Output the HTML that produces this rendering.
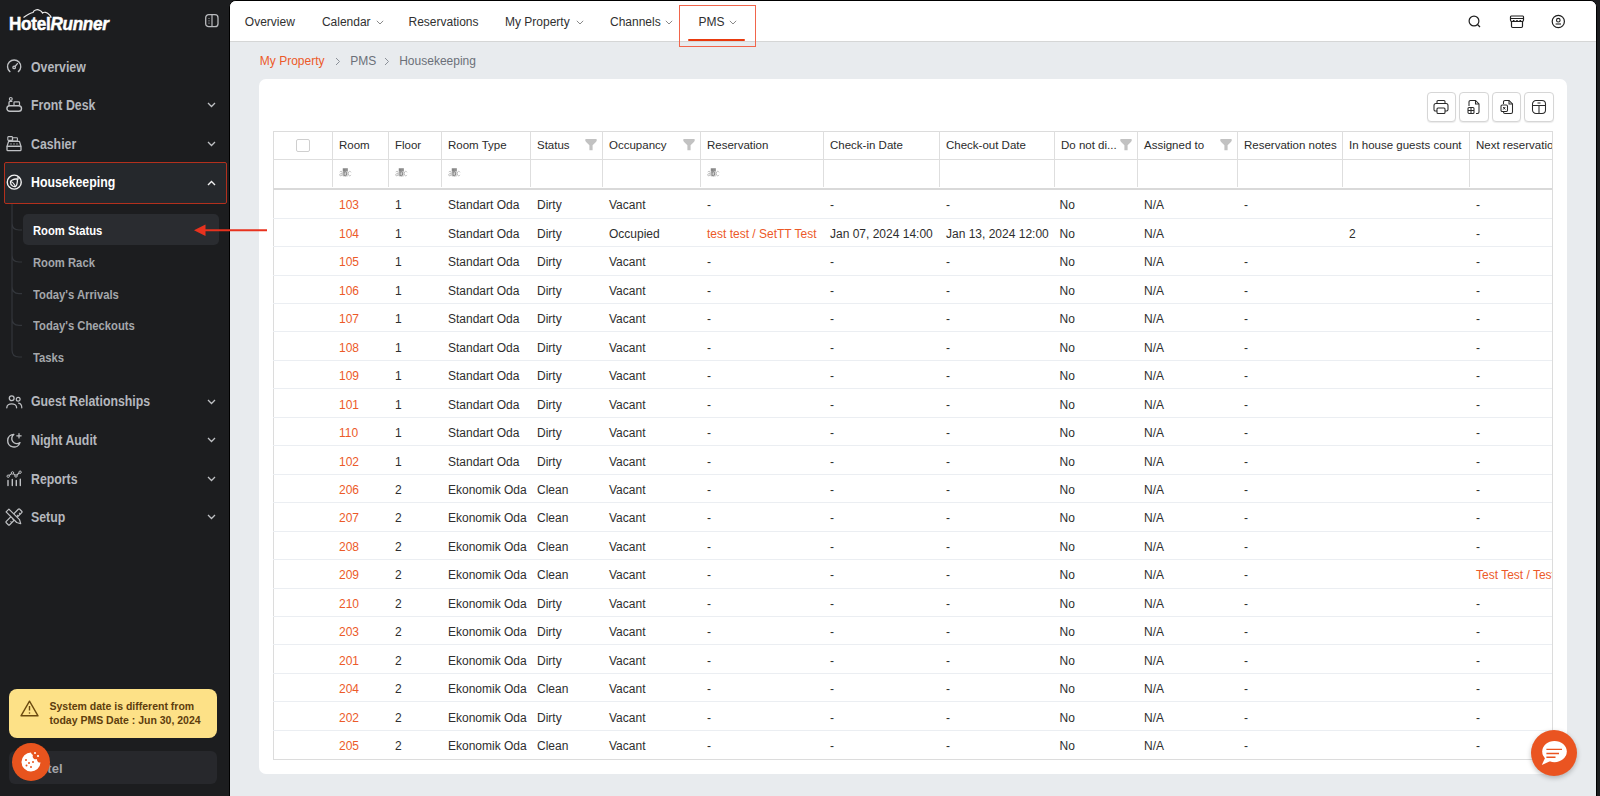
<!DOCTYPE html>
<html><head><meta charset="utf-8">
<style>
*{box-sizing:border-box;margin:0;padding:0}
html,body{width:1600px;height:796px;overflow:hidden;background:#1c1d1f;font-family:"Liberation Sans",sans-serif;}
.abs{position:absolute}
.t{position:absolute;white-space:nowrap;line-height:1}
.side-t{position:absolute;white-space:nowrap;font-weight:700;font-size:14px;transform:scaleX(0.88);transform-origin:0 0;color:#b4b7bd;line-height:1}
.sub-t{position:absolute;white-space:nowrap;font-weight:700;font-size:12.5px;transform:scaleX(0.9);transform-origin:0 0;color:#a8aaae;line-height:1}
svg{position:absolute;overflow:visible}
.nav{position:absolute;font-size:12px;color:#303030;white-space:nowrap;line-height:1;top:16px}
.hd{position:absolute;font-size:11.5px;color:#2b2b2b;white-space:nowrap;line-height:1}
.cell{position:absolute;font-size:12px;color:#2e2e2e;white-space:nowrap;line-height:1}
.or{color:#ec5a29}
.btn{position:absolute;top:92px;width:29.5px;height:29.8px;border:1px solid #d6d6d6;border-radius:4px;background:#fff;box-shadow:0 1px 1px rgba(0,0,0,.08)}
</style></head><body>

<div class="abs" style="left:0;top:0;width:229px;height:796px;background:#1c1d1f">
<div class="t" style="left:9px;top:14px;font-size:19px;font-weight:700;color:#fff;transform:scaleX(0.9);transform-origin:0 0;letter-spacing:-0.3px;-webkit-text-stroke:0.5px #fff">Hotel<i>Runner</i></div>
<svg style="left:0;top:0" width="229" height="40"><path d="M23.5 17.5 C27 15,30 13,33 12.5 C34 10,37 9,39.5 10.2 C41 10.8,42 11.8,42.5 13 C44 11.8,47 12,48.5 14 C50 15,51 16.5,51 18" fill="none" stroke="#ececec" stroke-width="1.2"/></svg>
<svg style="left:205px;top:14px" width="14" height="14" viewBox="0 0 14 14"><rect x="0.7" y="0.7" width="12.3" height="12" rx="3" fill="none" stroke="#b9bbbe" stroke-width="1.3"/><line x1="7" y1="1" x2="7" y2="13" stroke="#b9bbbe" stroke-width="1.2"/><circle cx="4" cy="4.5" r=".6" fill="#b9bbbe"/><circle cx="4" cy="6.8" r=".6" fill="#b9bbbe"/><circle cx="4" cy="9.1" r=".6" fill="#b9bbbe"/></svg>
<div class="abs" style="left:3.5px;top:162.2px;width:223.2px;height:41.8px;background:#25282c;border:1.8px solid #b3301d;border-radius:2px"></div>
<div class="side-t" style="left:30.5px;top:59.6px;color:#b4b7bd">Overview</div>
<svg style="left:6px;top:58.8px" width="16" height="16" viewBox="0 0 16 16"><path d="M3.9 12.6 A6.6 6.6 0 1 1 12.4 12.6" fill="none" stroke="#bfc1c4" stroke-width="1.4" stroke-linecap="round"/><circle cx="8.15" cy="8.4" r="1.25" fill="none" stroke="#bfc1c4" stroke-width="1.3"/><line x1="9" y1="7.5" x2="11.4" y2="4.6" stroke="#bfc1c4" stroke-width="1.3" stroke-linecap="round"/></svg>
<div class="side-t" style="left:30.5px;top:98.1px;color:#b4b7bd">Front Desk</div>
<svg style="left:6px;top:97.3px" width="16" height="16" viewBox="0 0 16 16"><circle cx="4.8" cy="1.9" r="1.4" fill="none" stroke="#bfc1c4" stroke-width="1.2"/><path d="M3 8.4 V5.6 Q3 4.4 4.2 4.4 H5.8" fill="none" stroke="#bfc1c4" stroke-width="1.3" stroke-linecap="round"/><rect x="8" y="4.9" width="5.5" height="3.6" rx=".7" fill="none" stroke="#bfc1c4" stroke-width="1.2"/><rect x="0.9" y="8.7" width="14.6" height="5.6" rx="2.8" fill="none" stroke="#bfc1c4" stroke-width="1.4"/></svg>
<svg style="left:207px;top:102.3px" width="9" height="6" viewBox="0 0 9 6"><path d="M1 1 L4.5 4.5 L8 1" fill="none" stroke="#bfc1c4" stroke-width="1.3"/></svg>
<div class="side-t" style="left:30.5px;top:136.5px;color:#b4b7bd">Cashier</div>
<svg style="left:6px;top:135.7px" width="16" height="16" viewBox="0 0 16 16"><rect x="1.8" y="0.6" width="4.6" height="3.8" rx=".6" fill="none" stroke="#bfc1c4" stroke-width="1.1"/><rect x="6.6" y="1.8" width="4.8" height="3.2" rx=".6" fill="none" stroke="#bfc1c4" stroke-width="1.1"/><path d="M2.6 5.4 H13.4 L15 10.4 H1 Z" fill="none" stroke="#bfc1c4" stroke-width="1.3" stroke-linejoin="round"/><rect x="1" y="10.4" width="14" height="4.2" rx=".9" fill="none" stroke="#bfc1c4" stroke-width="1.3"/><circle cx="5" cy="7.9" r=".7" fill="#bfc1c4"/><circle cx="8" cy="7.9" r=".7" fill="#bfc1c4"/><circle cx="11" cy="7.9" r=".7" fill="#bfc1c4"/></svg>
<svg style="left:207px;top:140.7px" width="9" height="6" viewBox="0 0 9 6"><path d="M1 1 L4.5 4.5 L8 1" fill="none" stroke="#bfc1c4" stroke-width="1.3"/></svg>
<div class="side-t" style="left:30.5px;top:175.3px;color:#ffffff">Housekeeping</div>
<svg style="left:6px;top:174.5px" width="16" height="16" viewBox="0 0 16 16"><circle cx="8.25" cy="7.15" r="7" fill="none" stroke="#f2f2f2" stroke-width="1.4"/><path d="M11.2 4.2 Q9 3.6 6.2 5 Q4.6 5.9 4.4 6.8 Q4.3 9.6 6.6 11 Q8.2 11.8 9.6 11.5 Q10.6 10.6 11 8.8 Q11.8 6 11.2 4.2 Z" fill="none" stroke="#f2f2f2" stroke-width="1.3" stroke-linejoin="round"/><path d="M4.6 6.8 Q6.5 6.2 9.5 11.4" fill="none" stroke="#f2f2f2" stroke-width="1.1"/><circle cx="12" cy="3.4" r="0.9" fill="none" stroke="#f2f2f2" stroke-width="1"/></svg>
<svg style="left:207px;top:179.5px" width="9" height="6" viewBox="0 0 9 6"><path d="M1 5 L4.5 1.5 L8 5" fill="none" stroke="#f0f0f0" stroke-width="1.4"/></svg>
<div class="side-t" style="left:30.5px;top:394.4px;color:#b4b7bd">Guest Relationships</div>
<svg style="left:6px;top:393.6px" width="16" height="16" viewBox="0 0 16 16"><circle cx="5.7" cy="4.3" r="2.4" fill="none" stroke="#bfc1c4" stroke-width="1.3"/><path d="M0.8 13.8 C0.8 8.6,10.6 8.6,10.6 13.8" fill="none" stroke="#bfc1c4" stroke-width="1.3" stroke-linecap="round"/><circle cx="12.2" cy="5.2" r="1.9" fill="none" stroke="#bfc1c4" stroke-width="1.2"/><path d="M12.6 9.2 C14.8 9.6,15.8 11.4,15.8 13.8" fill="none" stroke="#bfc1c4" stroke-width="1.2" stroke-linecap="round"/></svg>
<svg style="left:207px;top:398.6px" width="9" height="6" viewBox="0 0 9 6"><path d="M1 1 L4.5 4.5 L8 1" fill="none" stroke="#bfc1c4" stroke-width="1.3"/></svg>
<div class="side-t" style="left:30.5px;top:433.0px;color:#b4b7bd">Night Audit</div>
<svg style="left:6px;top:432.2px" width="16" height="16" viewBox="0 0 16 16"><path d="M7.8 2.4 A6.3 6.3 0 1 0 14 10.6 A4.9 4.9 0 0 1 7.8 2.4 Z" fill="none" stroke="#bfc1c4" stroke-width="1.4" stroke-linejoin="round"/><path d="M13 1.6 V6 M10.8 3.8 H15.2" stroke="#bfc1c4" stroke-width="1.2" stroke-linecap="round"/></svg>
<svg style="left:207px;top:437.2px" width="9" height="6" viewBox="0 0 9 6"><path d="M1 1 L4.5 4.5 L8 1" fill="none" stroke="#bfc1c4" stroke-width="1.3"/></svg>
<div class="side-t" style="left:30.5px;top:471.8px;color:#b4b7bd">Reports</div>
<svg style="left:6px;top:471.0px" width="16" height="16" viewBox="0 0 16 16"><path d="M2 14.5 V9.5 M6.3 14.5 V8.5 M10.3 14.5 V9.5 M14.3 14.5 V8.2" stroke="#bfc1c4" stroke-width="1.4" stroke-linecap="round"/><path d="M2.2 5.2 L6.5 1.9 L10 5 L14.1 1" fill="none" stroke="#bfc1c4" stroke-width="1.1"/><circle cx="2.2" cy="5.2" r="1.2" fill="#1c1d1f" stroke="#bfc1c4" stroke-width="1"/><circle cx="6.5" cy="1.9" r="1.2" fill="#1c1d1f" stroke="#bfc1c4" stroke-width="1"/><circle cx="10" cy="5" r="1.2" fill="#1c1d1f" stroke="#bfc1c4" stroke-width="1"/><circle cx="14.1" cy="1.2" r="1.2" fill="#1c1d1f" stroke="#bfc1c4" stroke-width="1"/></svg>
<svg style="left:207px;top:476.0px" width="9" height="6" viewBox="0 0 9 6"><path d="M1 1 L4.5 4.5 L8 1" fill="none" stroke="#bfc1c4" stroke-width="1.3"/></svg>
<div class="side-t" style="left:30.5px;top:510.0px;color:#b4b7bd">Setup</div>
<svg style="left:6px;top:509.2px" width="16" height="16" viewBox="0 0 16 16"><g transform="rotate(45 8 8)"><rect x="5.6" y="-1.5" width="4.8" height="19" rx="1" fill="none" stroke="#bfc1c4" stroke-width="1.2"/><path d="M10.4 1.5 H8.6 M10.4 4.5 H8.6 M10.4 7.5 H8.6 M10.4 10.5 H8.6 M10.4 13.5 H8.6" stroke="#bfc1c4" stroke-width="1"/></g><g transform="rotate(-45 8 8)"><path d="M6 -1.2 H10 V13.8 L8 17.5 L6 13.8 Z" fill="#1c1d1f" stroke="#bfc1c4" stroke-width="1.2" stroke-linejoin="round"/></g></svg>
<svg style="left:207px;top:514.2px" width="9" height="6" viewBox="0 0 9 6"><path d="M1 1 L4.5 4.5 L8 1" fill="none" stroke="#bfc1c4" stroke-width="1.3"/></svg>
<svg style="left:0;top:200px" width="30" height="170"><path d="M12 4 V150 Q12 157 19 157 H22 M12 23 Q12 30 19 30 H22 M12 55 Q12 62 19 62 H22 M12 86.6 Q12 93.6 19 93.6 H22 M12 118.3 Q12 125.3 19 125.3 H22" fill="none" stroke="#33363b" stroke-width="1.2"/></svg>
<div class="abs" style="left:22.5px;top:214px;width:196px;height:30.5px;background:#2a2c30;border-radius:5px"></div>
<div class="sub-t" style="left:32.5px;top:225.4px;color:#ffffff">Room Status</div>
<div class="sub-t" style="left:32.5px;top:256.8px;color:#a4a7ab">Room Rack</div>
<div class="sub-t" style="left:32.5px;top:288.6px;color:#a4a7ab">Today's Arrivals</div>
<div class="sub-t" style="left:32.5px;top:320.3px;color:#a4a7ab">Today's Checkouts</div>
<div class="sub-t" style="left:32.5px;top:352.0px;color:#a4a7ab">Tasks</div>
<div class="abs" style="left:9px;top:688.5px;width:208px;height:49px;background:#fde187;border-radius:8px"></div>
<svg style="left:20px;top:700px" width="19" height="17" viewBox="0 0 19 17"><path d="M9.5 1.2 L18 15.8 H1 Z" fill="none" stroke="#6b4a10" stroke-width="1.4" stroke-linejoin="round"/><line x1="9.5" y1="6" x2="9.5" y2="10.5" stroke="#6b4a10" stroke-width="1.4"/><circle cx="9.5" cy="13" r=".8" fill="#6b4a10"/></svg>
<div class="t" style="left:49.5px;top:700px;font-size:10.5px;font-weight:700;color:#5e3d0d;line-height:13.8px">System date is different from<br>today PMS Date : Jun 30, 2024</div>
<div class="abs" style="left:9px;top:751px;width:208px;height:33px;background:#27282c;border-radius:6px"></div>
<div class="t" style="left:30px;top:762px;font-size:13px;font-weight:700;color:#a3a5a9">Hotel</div>
<div class="abs" style="left:12.3px;top:743px;width:38px;height:38px;border-radius:50%;background:#e8541e"></div>
<svg style="left:20px;top:751px" width="22" height="22" viewBox="0 0 22 22"><path d="M11 1.5 A9.5 9.5 0 1 0 20.5 11.5 A3 3 0 0 1 17 8 A3 3 0 0 1 13 4 A3 3 0 0 1 11 1.5 Z" fill="#fff"/><circle cx="6" cy="9" r="1" fill="#e8541e"/><circle cx="9" cy="12" r="1" fill="#e8541e"/><circle cx="6.5" cy="14.5" r="1" fill="#e8541e"/><circle cx="11" cy="16" r="1" fill="#e8541e"/><circle cx="13" cy="11" r="1" fill="#e8541e"/><circle cx="15" cy="2" r="1" fill="#fff"/><circle cx="18" cy="5" r="1.1" fill="#fff"/></svg>
</div>
<div class="abs" style="left:229px;top:0;width:1368px;height:800px;border:1px solid #000;border-radius:7px 7px 0 0;background:#e8ebee;overflow:hidden"></div>
<div class="abs" style="left:230px;top:1px;width:1366px;height:40px;background:#fff;border-radius:6px 6px 0 0"></div>
<div class="abs" style="left:230px;top:41px;width:1366px;height:1px;background:#d5d6d6"></div>
<div class="nav" style="left:244.8px">Overview</div>
<div class="nav" style="left:321.9px">Calendar</div>
<svg style="left:375.5px;top:19.5px" width="8" height="5" viewBox="0 0 8 5"><path d="M0.8 0.8 L4 4 L7.2 0.8" fill="none" stroke="#8a8a8a" stroke-width="1"/></svg>
<div class="nav" style="left:408.5px">Reservations</div>
<div class="nav" style="left:505px">My Property</div>
<svg style="left:576.0px;top:19.5px" width="8" height="5" viewBox="0 0 8 5"><path d="M0.8 0.8 L4 4 L7.2 0.8" fill="none" stroke="#8a8a8a" stroke-width="1"/></svg>
<div class="nav" style="left:610px">Channels</div>
<svg style="left:664.7px;top:19.5px" width="8" height="5" viewBox="0 0 8 5"><path d="M0.8 0.8 L4 4 L7.2 0.8" fill="none" stroke="#8a8a8a" stroke-width="1"/></svg>
<div class="nav" style="left:698.6px">PMS</div>
<svg style="left:728.5px;top:19.5px" width="8" height="5" viewBox="0 0 8 5"><path d="M0.8 0.8 L4 4 L7.2 0.8" fill="none" stroke="#8a8a8a" stroke-width="1"/></svg>
<div class="abs" style="left:679px;top:5px;width:76.5px;height:42px;border:1.2px solid #f1654b"></div>
<div class="abs" style="left:688px;top:38.5px;width:56.5px;height:2.6px;background:#e93a0e;border-radius:2px"></div>
<svg style="left:1466px;top:13px" width="18" height="18" viewBox="0 0 18 18"><circle cx="8" cy="8" r="4.9" fill="none" stroke="#1f1f1f" stroke-width="1.2"/><line x1="11.5" y1="11.5" x2="14" y2="14" stroke="#1f1f1f" stroke-width="1.3"/></svg>
<svg style="left:1508px;top:13px" width="18" height="18" viewBox="0 0 18 18"><path d="M3.5 8 V13.3 Q3.5 14.5 4.7 14.5 H13.3 Q14.5 14.5 14.5 13.3 V8" fill="none" stroke="#1f1f1f" stroke-width="1.2"/><path d="M3.2 3 H14.8 Q15.5 3 15.5 4 V7 Q15.5 8.5 14 8.5 Q12.3 8.5 12.3 7 Q12.3 8.5 10.6 8.5 Q9 8.5 9 7 Q9 8.5 7.4 8.5 Q5.7 8.5 5.7 7 Q5.7 8.5 4 8.5 Q2.5 8.5 2.5 7 V4 Q2.5 3 3.2 3 Z" fill="none" stroke="#1f1f1f" stroke-width="1.2"/><line x1="2.5" y1="5.5" x2="15.5" y2="5.5" stroke="#1f1f1f" stroke-width="1"/></svg>
<svg style="left:1549px;top:12px" width="19" height="19" viewBox="0 0 19 19"><circle cx="9.3" cy="9.5" r="6.1" fill="none" stroke="#1f1f1f" stroke-width="1.2"/><circle cx="9.3" cy="8.2" r="1.8" fill="none" stroke="#1f1f1f" stroke-width="1.1"/><line x1="6.6" y1="12" x2="12" y2="12" stroke="#1f1f1f" stroke-width="1.1"/></svg>
<div class="t" style="left:259.8px;top:55px;font-size:12px;color:#ec5a29">My Property</div>
<svg style="left:335px;top:56.5px" width="6" height="9" viewBox="0 0 6 9"><path d="M1 1 L4.5 4.5 L1 8" fill="none" stroke="#8b9098" stroke-width="1"/></svg>
<div class="t" style="left:350.2px;top:55px;font-size:12px;color:#6b7079">PMS</div>
<svg style="left:384px;top:56.5px" width="6" height="9" viewBox="0 0 6 9"><path d="M1 1 L4.5 4.5 L1 8" fill="none" stroke="#8b9098" stroke-width="1"/></svg>
<div class="t" style="left:399.2px;top:55px;font-size:12px;color:#6b7079">Housekeeping</div>
<div class="abs" style="left:259px;top:78.5px;width:1307.7px;height:695px;background:#fff;border-radius:7px"></div>
<div class="btn" style="left:1426.5px"></div>
<div class="btn" style="left:1459px"></div>
<div class="btn" style="left:1491.5px"></div>
<div class="btn" style="left:1524.3px"></div>
<svg style="left:1433px;top:99px" width="16" height="16" viewBox="0 0 16 16"><path d="M4 4.5 V2.5 Q4 1.5 5 1.5 H11 Q12 1.5 12 2.5 V4.5" fill="none" stroke="#2a2a2a" stroke-width="1.05"/><path d="M4 12 H2.5 Q1 12 1 10.5 V6.5 Q1 4.5 3 4.5 H13 Q15 4.5 15 6.5 V10.5 Q15 12 13.5 12 H12" fill="none" stroke="#2a2a2a" stroke-width="1.05"/><rect x="4" y="9" width="8" height="5.5" rx="1" fill="none" stroke="#2a2a2a" stroke-width="1.05"/></svg>
<svg style="left:1466px;top:99px" width="16" height="16" viewBox="0 0 16 16"><path d="M3 7 V3 Q3 1.5 4.5 1.5 H9.5 L13 5 V13 Q13 14.5 11.5 14.5 H10" fill="none" stroke="#2a2a2a" stroke-width="1.05"/><path d="M9.5 1.5 V5 H13" fill="none" stroke="#2a2a2a" stroke-width="1.05"/><rect x="2" y="8.5" width="6" height="6" rx="1" fill="none" stroke="#2a2a2a" stroke-width="1.05"/><path d="M5 8.5 V14.5 M2 11.5 H8" fill="none" stroke="#2a2a2a" stroke-width="1.05"/></svg>
<svg style="left:1498.5px;top:99px" width="16" height="16" viewBox="0 0 16 16"><path d="M4.5 5 V3 Q4.5 1.5 6 1.5 H10 L13.5 5 V13 Q13.5 14.5 12 14.5 H6 Q4.5 14.5 4.5 13" fill="none" stroke="#2a2a2a" stroke-width="1.05"/><path d="M10 1.5 V5 H13.5" fill="none" stroke="#2a2a2a" stroke-width="1.05"/><rect x="2" y="6" width="6.5" height="6.5" rx="1.2" fill="none" stroke="#2a2a2a" stroke-width="1.05"/><path d="M4.2 8 L6.3 10.5 M6.3 8 L4.2 10.5" stroke="#1f1f1f" stroke-width="1"/></svg>
<svg style="left:1531px;top:99px" width="16" height="16" viewBox="0 0 16 16"><rect x="1.5" y="1.5" width="13" height="13" rx="3.5" fill="none" stroke="#2a2a2a" stroke-width="1.05"/><path d="M1.5 6.5 H14.5 M8 6.5 V14.5" fill="none" stroke="#2a2a2a" stroke-width="1.05"/><path d="M6.5 4 H9.5" fill="none" stroke="#2a2a2a" stroke-width="1.05"/></svg>
<div class="abs" style="left:273px;top:130.7px;width:1280.0px;height:629.8px;border:1px solid #dcdcdc;overflow:hidden"></div>
<div class="abs" style="left:273px;top:159.3px;width:1279.0px;height:1px;background:#dedede"></div>
<div class="abs" style="left:273px;top:188px;width:1279.0px;height:1.6px;background:#d9d9d9"></div>
<div class="abs" style="left:332px;top:130.7px;width:1px;height:56.8px;background:#dedede"></div>
<div class="abs" style="left:388px;top:130.7px;width:1px;height:56.8px;background:#dedede"></div>
<div class="abs" style="left:441px;top:130.7px;width:1px;height:56.8px;background:#dedede"></div>
<div class="abs" style="left:530px;top:130.7px;width:1px;height:56.8px;background:#dedede"></div>
<div class="abs" style="left:602px;top:130.7px;width:1px;height:56.8px;background:#dedede"></div>
<div class="abs" style="left:700px;top:130.7px;width:1px;height:56.8px;background:#dedede"></div>
<div class="abs" style="left:823px;top:130.7px;width:1px;height:56.8px;background:#dedede"></div>
<div class="abs" style="left:939px;top:130.7px;width:1px;height:56.8px;background:#dedede"></div>
<div class="abs" style="left:1054px;top:130.7px;width:1px;height:56.8px;background:#dedede"></div>
<div class="abs" style="left:1137px;top:130.7px;width:1px;height:56.8px;background:#dedede"></div>
<div class="abs" style="left:1237px;top:130.7px;width:1px;height:56.8px;background:#dedede"></div>
<div class="abs" style="left:1342px;top:130.7px;width:1px;height:56.8px;background:#dedede"></div>
<div class="abs" style="left:1469px;top:130.7px;width:1px;height:56.8px;background:#dedede"></div>
<div class="abs" style="left:296px;top:139px;width:13.5px;height:13px;border:1px solid #cfcfcf;border-radius:2px;background:#fff"></div>
<div class="abs" style="left:273px;top:130.7px;width:1279.0px;height:630px;overflow:hidden">
<div class="hd" style="left:66.0px;top:9.3px">Room</div>
<svg style="left:65.5px;top:37.8px" width="13" height="9" viewBox="0 0 13 9"><path d="M0.8 4.2 Q1.2 3.3 2.1 3.3 Q3.2 3.3 3.2 4.4 V7.8 M3.2 5.6 Q0.6 5.4 0.6 6.8 Q0.7 7.9 1.8 7.8 Q2.8 7.7 3.2 6.8" fill="none" stroke="#b5b5b5" stroke-width=".9"/><rect x="3.8" y="0.3" width="5" height="8.2" fill="#cfcfcf"/><rect x="3.8" y="0.3" width="5" height="3" fill="#8f8f8f"/><path d="M5 1 V7.8 M5 4.6 Q5.6 3.7 6.4 3.7 Q7.6 3.8 7.6 5.7 Q7.6 7.8 6.3 7.8 Q5.5 7.8 5 7" fill="none" stroke="#7a7a7a" stroke-width=".9"/><path d="M12 4.3 Q11.5 3.3 10.6 3.3 Q9.3 3.4 9.3 5.6 Q9.3 7.8 10.6 7.8 Q11.5 7.8 12 6.9" fill="none" stroke="#b5b5b5" stroke-width=".9"/></svg>
<div class="hd" style="left:122.0px;top:9.3px">Floor</div>
<svg style="left:121.5px;top:37.8px" width="13" height="9" viewBox="0 0 13 9"><path d="M0.8 4.2 Q1.2 3.3 2.1 3.3 Q3.2 3.3 3.2 4.4 V7.8 M3.2 5.6 Q0.6 5.4 0.6 6.8 Q0.7 7.9 1.8 7.8 Q2.8 7.7 3.2 6.8" fill="none" stroke="#b5b5b5" stroke-width=".9"/><rect x="3.8" y="0.3" width="5" height="8.2" fill="#cfcfcf"/><rect x="3.8" y="0.3" width="5" height="3" fill="#8f8f8f"/><path d="M5 1 V7.8 M5 4.6 Q5.6 3.7 6.4 3.7 Q7.6 3.8 7.6 5.7 Q7.6 7.8 6.3 7.8 Q5.5 7.8 5 7" fill="none" stroke="#7a7a7a" stroke-width=".9"/><path d="M12 4.3 Q11.5 3.3 10.6 3.3 Q9.3 3.4 9.3 5.6 Q9.3 7.8 10.6 7.8 Q11.5 7.8 12 6.9" fill="none" stroke="#b5b5b5" stroke-width=".9"/></svg>
<div class="hd" style="left:175.0px;top:9.3px">Room Type</div>
<svg style="left:174.5px;top:37.8px" width="13" height="9" viewBox="0 0 13 9"><path d="M0.8 4.2 Q1.2 3.3 2.1 3.3 Q3.2 3.3 3.2 4.4 V7.8 M3.2 5.6 Q0.6 5.4 0.6 6.8 Q0.7 7.9 1.8 7.8 Q2.8 7.7 3.2 6.8" fill="none" stroke="#b5b5b5" stroke-width=".9"/><rect x="3.8" y="0.3" width="5" height="8.2" fill="#cfcfcf"/><rect x="3.8" y="0.3" width="5" height="3" fill="#8f8f8f"/><path d="M5 1 V7.8 M5 4.6 Q5.6 3.7 6.4 3.7 Q7.6 3.8 7.6 5.7 Q7.6 7.8 6.3 7.8 Q5.5 7.8 5 7" fill="none" stroke="#7a7a7a" stroke-width=".9"/><path d="M12 4.3 Q11.5 3.3 10.6 3.3 Q9.3 3.4 9.3 5.6 Q9.3 7.8 10.6 7.8 Q11.5 7.8 12 6.9" fill="none" stroke="#b5b5b5" stroke-width=".9"/></svg>
<div class="hd" style="left:264.0px;top:9.3px">Status</div>
<svg style="left:311.8px;top:8.3px" width="12" height="12" viewBox="0 0 12 12"><path d="M0.2 0.9 Q0.2 0.1 1 0.1 H11 Q11.8 0.1 11.8 0.9 Q11.8 1.9 10.9 2.9 L7.6 6.2 V11.2 H4.4 V6.2 L1.1 2.9 Q0.2 1.9 0.2 0.9 Z" fill="#c2c2c2"/></svg>
<div class="hd" style="left:336.0px;top:9.3px">Occupancy</div>
<svg style="left:409.8px;top:8.3px" width="12" height="12" viewBox="0 0 12 12"><path d="M0.2 0.9 Q0.2 0.1 1 0.1 H11 Q11.8 0.1 11.8 0.9 Q11.8 1.9 10.9 2.9 L7.6 6.2 V11.2 H4.4 V6.2 L1.1 2.9 Q0.2 1.9 0.2 0.9 Z" fill="#c2c2c2"/></svg>
<div class="hd" style="left:434.0px;top:9.3px">Reservation</div>
<svg style="left:433.5px;top:37.8px" width="13" height="9" viewBox="0 0 13 9"><path d="M0.8 4.2 Q1.2 3.3 2.1 3.3 Q3.2 3.3 3.2 4.4 V7.8 M3.2 5.6 Q0.6 5.4 0.6 6.8 Q0.7 7.9 1.8 7.8 Q2.8 7.7 3.2 6.8" fill="none" stroke="#b5b5b5" stroke-width=".9"/><rect x="3.8" y="0.3" width="5" height="8.2" fill="#cfcfcf"/><rect x="3.8" y="0.3" width="5" height="3" fill="#8f8f8f"/><path d="M5 1 V7.8 M5 4.6 Q5.6 3.7 6.4 3.7 Q7.6 3.8 7.6 5.7 Q7.6 7.8 6.3 7.8 Q5.5 7.8 5 7" fill="none" stroke="#7a7a7a" stroke-width=".9"/><path d="M12 4.3 Q11.5 3.3 10.6 3.3 Q9.3 3.4 9.3 5.6 Q9.3 7.8 10.6 7.8 Q11.5 7.8 12 6.9" fill="none" stroke="#b5b5b5" stroke-width=".9"/></svg>
<div class="hd" style="left:557.0px;top:9.3px">Check-in Date</div>
<div class="hd" style="left:673.0px;top:9.3px">Check-out Date</div>
<div class="hd" style="left:788.0px;top:9.3px">Do not di...</div>
<svg style="left:846.8px;top:8.3px" width="12" height="12" viewBox="0 0 12 12"><path d="M0.2 0.9 Q0.2 0.1 1 0.1 H11 Q11.8 0.1 11.8 0.9 Q11.8 1.9 10.9 2.9 L7.6 6.2 V11.2 H4.4 V6.2 L1.1 2.9 Q0.2 1.9 0.2 0.9 Z" fill="#c2c2c2"/></svg>
<div class="hd" style="left:871.0px;top:9.3px">Assigned to</div>
<svg style="left:946.8px;top:8.3px" width="12" height="12" viewBox="0 0 12 12"><path d="M0.2 0.9 Q0.2 0.1 1 0.1 H11 Q11.8 0.1 11.8 0.9 Q11.8 1.9 10.9 2.9 L7.6 6.2 V11.2 H4.4 V6.2 L1.1 2.9 Q0.2 1.9 0.2 0.9 Z" fill="#c2c2c2"/></svg>
<div class="hd" style="left:971.0px;top:9.3px">Reservation notes</div>
<div class="hd" style="left:1076.0px;top:9.3px">In house guests count</div>
<div class="hd" style="left:1203.0px;top:9.3px">Next reservation</div>
<div class="cell or" style="left:66.0px;top:68.15px">103</div>
<div class="cell" style="left:122.0px;top:68.15px">1</div>
<div class="cell" style="left:175.0px;top:68.15px">Standart Oda</div>
<div class="cell" style="left:264.0px;top:68.15px">Dirty</div>
<div class="cell" style="left:336.0px;top:68.15px">Vacant</div>
<div class="cell" style="left:434.0px;top:68.15px">-</div>
<div class="cell" style="left:557.0px;top:68.15px">-</div>
<div class="cell" style="left:673.0px;top:68.15px">-</div>
<div class="cell" style="left:786.5px;top:68.15px">No</div>
<div class="cell" style="left:871.0px;top:68.15px">N/A</div>
<div class="cell" style="left:971.0px;top:68.15px">-</div>
<div class="cell" style="left:1203.0px;top:68.15px">-</div>
<div class="abs" style="left:0;top:87.30000000000001px;width:1279.0px;height:1px;background:#ebeef2"></div>
<div class="cell or" style="left:66.0px;top:97.18px">104</div>
<div class="cell" style="left:122.0px;top:97.18px">1</div>
<div class="cell" style="left:175.0px;top:97.18px">Standart Oda</div>
<div class="cell" style="left:264.0px;top:97.18px">Dirty</div>
<div class="cell" style="left:336.0px;top:97.18px">Occupied</div>
<div class="cell or" style="left:434.0px;top:97.18px">test test / SetTT Test</div>
<div class="cell" style="left:557.0px;top:97.18px">Jan 07, 2024 14:00</div>
<div class="cell" style="left:673.0px;top:97.18px">Jan 13, 2024 12:00</div>
<div class="cell" style="left:786.5px;top:97.18px">No</div>
<div class="cell" style="left:871.0px;top:97.18px">N/A</div>
<div class="cell" style="left:1076.0px;top:97.18px">2</div>
<div class="cell" style="left:1203.0px;top:97.18px">-</div>
<div class="abs" style="left:0;top:115.30000000000001px;width:1279.0px;height:1px;background:#ebeef2"></div>
<div class="cell or" style="left:66.0px;top:125.63px">105</div>
<div class="cell" style="left:122.0px;top:125.63px">1</div>
<div class="cell" style="left:175.0px;top:125.63px">Standart Oda</div>
<div class="cell" style="left:264.0px;top:125.63px">Dirty</div>
<div class="cell" style="left:336.0px;top:125.63px">Vacant</div>
<div class="cell" style="left:434.0px;top:125.63px">-</div>
<div class="cell" style="left:557.0px;top:125.63px">-</div>
<div class="cell" style="left:673.0px;top:125.63px">-</div>
<div class="cell" style="left:786.5px;top:125.63px">No</div>
<div class="cell" style="left:871.0px;top:125.63px">N/A</div>
<div class="cell" style="left:971.0px;top:125.63px">-</div>
<div class="cell" style="left:1203.0px;top:125.63px">-</div>
<div class="abs" style="left:0;top:144.3px;width:1279.0px;height:1px;background:#ebeef2"></div>
<div class="cell or" style="left:66.0px;top:154.09px">106</div>
<div class="cell" style="left:122.0px;top:154.09px">1</div>
<div class="cell" style="left:175.0px;top:154.09px">Standart Oda</div>
<div class="cell" style="left:264.0px;top:154.09px">Dirty</div>
<div class="cell" style="left:336.0px;top:154.09px">Vacant</div>
<div class="cell" style="left:434.0px;top:154.09px">-</div>
<div class="cell" style="left:557.0px;top:154.09px">-</div>
<div class="cell" style="left:673.0px;top:154.09px">-</div>
<div class="cell" style="left:786.5px;top:154.09px">No</div>
<div class="cell" style="left:871.0px;top:154.09px">N/A</div>
<div class="cell" style="left:971.0px;top:154.09px">-</div>
<div class="cell" style="left:1203.0px;top:154.09px">-</div>
<div class="abs" style="left:0;top:172.3px;width:1279.0px;height:1px;background:#ebeef2"></div>
<div class="cell or" style="left:66.0px;top:182.55px">107</div>
<div class="cell" style="left:122.0px;top:182.55px">1</div>
<div class="cell" style="left:175.0px;top:182.55px">Standart Oda</div>
<div class="cell" style="left:264.0px;top:182.55px">Dirty</div>
<div class="cell" style="left:336.0px;top:182.55px">Vacant</div>
<div class="cell" style="left:434.0px;top:182.55px">-</div>
<div class="cell" style="left:557.0px;top:182.55px">-</div>
<div class="cell" style="left:673.0px;top:182.55px">-</div>
<div class="cell" style="left:786.5px;top:182.55px">No</div>
<div class="cell" style="left:871.0px;top:182.55px">N/A</div>
<div class="cell" style="left:971.0px;top:182.55px">-</div>
<div class="cell" style="left:1203.0px;top:182.55px">-</div>
<div class="abs" style="left:0;top:200.3px;width:1279.0px;height:1px;background:#ebeef2"></div>
<div class="cell or" style="left:66.0px;top:211.00px">108</div>
<div class="cell" style="left:122.0px;top:211.00px">1</div>
<div class="cell" style="left:175.0px;top:211.00px">Standart Oda</div>
<div class="cell" style="left:264.0px;top:211.00px">Dirty</div>
<div class="cell" style="left:336.0px;top:211.00px">Vacant</div>
<div class="cell" style="left:434.0px;top:211.00px">-</div>
<div class="cell" style="left:557.0px;top:211.00px">-</div>
<div class="cell" style="left:673.0px;top:211.00px">-</div>
<div class="cell" style="left:786.5px;top:211.00px">No</div>
<div class="cell" style="left:871.0px;top:211.00px">N/A</div>
<div class="cell" style="left:971.0px;top:211.00px">-</div>
<div class="cell" style="left:1203.0px;top:211.00px">-</div>
<div class="abs" style="left:0;top:229.3px;width:1279.0px;height:1px;background:#ebeef2"></div>
<div class="cell or" style="left:66.0px;top:239.46px">109</div>
<div class="cell" style="left:122.0px;top:239.46px">1</div>
<div class="cell" style="left:175.0px;top:239.46px">Standart Oda</div>
<div class="cell" style="left:264.0px;top:239.46px">Dirty</div>
<div class="cell" style="left:336.0px;top:239.46px">Vacant</div>
<div class="cell" style="left:434.0px;top:239.46px">-</div>
<div class="cell" style="left:557.0px;top:239.46px">-</div>
<div class="cell" style="left:673.0px;top:239.46px">-</div>
<div class="cell" style="left:786.5px;top:239.46px">No</div>
<div class="cell" style="left:871.0px;top:239.46px">N/A</div>
<div class="cell" style="left:971.0px;top:239.46px">-</div>
<div class="cell" style="left:1203.0px;top:239.46px">-</div>
<div class="abs" style="left:0;top:257.3px;width:1279.0px;height:1px;background:#ebeef2"></div>
<div class="cell or" style="left:66.0px;top:267.91px">101</div>
<div class="cell" style="left:122.0px;top:267.91px">1</div>
<div class="cell" style="left:175.0px;top:267.91px">Standart Oda</div>
<div class="cell" style="left:264.0px;top:267.91px">Dirty</div>
<div class="cell" style="left:336.0px;top:267.91px">Vacant</div>
<div class="cell" style="left:434.0px;top:267.91px">-</div>
<div class="cell" style="left:557.0px;top:267.91px">-</div>
<div class="cell" style="left:673.0px;top:267.91px">-</div>
<div class="cell" style="left:786.5px;top:267.91px">No</div>
<div class="cell" style="left:871.0px;top:267.91px">N/A</div>
<div class="cell" style="left:971.0px;top:267.91px">-</div>
<div class="cell" style="left:1203.0px;top:267.91px">-</div>
<div class="abs" style="left:0;top:286.3px;width:1279.0px;height:1px;background:#ebeef2"></div>
<div class="cell or" style="left:66.0px;top:296.37px">110</div>
<div class="cell" style="left:122.0px;top:296.37px">1</div>
<div class="cell" style="left:175.0px;top:296.37px">Standart Oda</div>
<div class="cell" style="left:264.0px;top:296.37px">Dirty</div>
<div class="cell" style="left:336.0px;top:296.37px">Vacant</div>
<div class="cell" style="left:434.0px;top:296.37px">-</div>
<div class="cell" style="left:557.0px;top:296.37px">-</div>
<div class="cell" style="left:673.0px;top:296.37px">-</div>
<div class="cell" style="left:786.5px;top:296.37px">No</div>
<div class="cell" style="left:871.0px;top:296.37px">N/A</div>
<div class="cell" style="left:971.0px;top:296.37px">-</div>
<div class="cell" style="left:1203.0px;top:296.37px">-</div>
<div class="abs" style="left:0;top:314.3px;width:1279.0px;height:1px;background:#ebeef2"></div>
<div class="cell or" style="left:66.0px;top:324.83px">102</div>
<div class="cell" style="left:122.0px;top:324.83px">1</div>
<div class="cell" style="left:175.0px;top:324.83px">Standart Oda</div>
<div class="cell" style="left:264.0px;top:324.83px">Dirty</div>
<div class="cell" style="left:336.0px;top:324.83px">Vacant</div>
<div class="cell" style="left:434.0px;top:324.83px">-</div>
<div class="cell" style="left:557.0px;top:324.83px">-</div>
<div class="cell" style="left:673.0px;top:324.83px">-</div>
<div class="cell" style="left:786.5px;top:324.83px">No</div>
<div class="cell" style="left:871.0px;top:324.83px">N/A</div>
<div class="cell" style="left:971.0px;top:324.83px">-</div>
<div class="cell" style="left:1203.0px;top:324.83px">-</div>
<div class="abs" style="left:0;top:343.3px;width:1279.0px;height:1px;background:#ebeef2"></div>
<div class="cell or" style="left:66.0px;top:353.28px">206</div>
<div class="cell" style="left:122.0px;top:353.28px">2</div>
<div class="cell" style="left:175.0px;top:353.28px">Ekonomik Oda</div>
<div class="cell" style="left:264.0px;top:353.28px">Clean</div>
<div class="cell" style="left:336.0px;top:353.28px">Vacant</div>
<div class="cell" style="left:434.0px;top:353.28px">-</div>
<div class="cell" style="left:557.0px;top:353.28px">-</div>
<div class="cell" style="left:673.0px;top:353.28px">-</div>
<div class="cell" style="left:786.5px;top:353.28px">No</div>
<div class="cell" style="left:871.0px;top:353.28px">N/A</div>
<div class="cell" style="left:971.0px;top:353.28px">-</div>
<div class="cell" style="left:1203.0px;top:353.28px">-</div>
<div class="abs" style="left:0;top:371.3px;width:1279.0px;height:1px;background:#ebeef2"></div>
<div class="cell or" style="left:66.0px;top:381.74px">207</div>
<div class="cell" style="left:122.0px;top:381.74px">2</div>
<div class="cell" style="left:175.0px;top:381.74px">Ekonomik Oda</div>
<div class="cell" style="left:264.0px;top:381.74px">Clean</div>
<div class="cell" style="left:336.0px;top:381.74px">Vacant</div>
<div class="cell" style="left:434.0px;top:381.74px">-</div>
<div class="cell" style="left:557.0px;top:381.74px">-</div>
<div class="cell" style="left:673.0px;top:381.74px">-</div>
<div class="cell" style="left:786.5px;top:381.74px">No</div>
<div class="cell" style="left:871.0px;top:381.74px">N/A</div>
<div class="cell" style="left:971.0px;top:381.74px">-</div>
<div class="cell" style="left:1203.0px;top:381.74px">-</div>
<div class="abs" style="left:0;top:400.3px;width:1279.0px;height:1px;background:#ebeef2"></div>
<div class="cell or" style="left:66.0px;top:410.19px">208</div>
<div class="cell" style="left:122.0px;top:410.19px">2</div>
<div class="cell" style="left:175.0px;top:410.19px">Ekonomik Oda</div>
<div class="cell" style="left:264.0px;top:410.19px">Clean</div>
<div class="cell" style="left:336.0px;top:410.19px">Vacant</div>
<div class="cell" style="left:434.0px;top:410.19px">-</div>
<div class="cell" style="left:557.0px;top:410.19px">-</div>
<div class="cell" style="left:673.0px;top:410.19px">-</div>
<div class="cell" style="left:786.5px;top:410.19px">No</div>
<div class="cell" style="left:871.0px;top:410.19px">N/A</div>
<div class="cell" style="left:971.0px;top:410.19px">-</div>
<div class="cell" style="left:1203.0px;top:410.19px">-</div>
<div class="abs" style="left:0;top:428.3px;width:1279.0px;height:1px;background:#ebeef2"></div>
<div class="cell or" style="left:66.0px;top:438.65px">209</div>
<div class="cell" style="left:122.0px;top:438.65px">2</div>
<div class="cell" style="left:175.0px;top:438.65px">Ekonomik Oda</div>
<div class="cell" style="left:264.0px;top:438.65px">Clean</div>
<div class="cell" style="left:336.0px;top:438.65px">Vacant</div>
<div class="cell" style="left:434.0px;top:438.65px">-</div>
<div class="cell" style="left:557.0px;top:438.65px">-</div>
<div class="cell" style="left:673.0px;top:438.65px">-</div>
<div class="cell" style="left:786.5px;top:438.65px">No</div>
<div class="cell" style="left:871.0px;top:438.65px">N/A</div>
<div class="cell" style="left:971.0px;top:438.65px">-</div>
<div class="cell or" style="left:1203.0px;top:438.65px">Test Test / Test Test</div>
<div class="abs" style="left:0;top:457.3px;width:1279.0px;height:1px;background:#ebeef2"></div>
<div class="cell or" style="left:66.0px;top:467.11px">210</div>
<div class="cell" style="left:122.0px;top:467.11px">2</div>
<div class="cell" style="left:175.0px;top:467.11px">Ekonomik Oda</div>
<div class="cell" style="left:264.0px;top:467.11px">Dirty</div>
<div class="cell" style="left:336.0px;top:467.11px">Vacant</div>
<div class="cell" style="left:434.0px;top:467.11px">-</div>
<div class="cell" style="left:557.0px;top:467.11px">-</div>
<div class="cell" style="left:673.0px;top:467.11px">-</div>
<div class="cell" style="left:786.5px;top:467.11px">No</div>
<div class="cell" style="left:871.0px;top:467.11px">N/A</div>
<div class="cell" style="left:971.0px;top:467.11px">-</div>
<div class="cell" style="left:1203.0px;top:467.11px">-</div>
<div class="abs" style="left:0;top:485.3px;width:1279.0px;height:1px;background:#ebeef2"></div>
<div class="cell or" style="left:66.0px;top:495.56px">203</div>
<div class="cell" style="left:122.0px;top:495.56px">2</div>
<div class="cell" style="left:175.0px;top:495.56px">Ekonomik Oda</div>
<div class="cell" style="left:264.0px;top:495.56px">Dirty</div>
<div class="cell" style="left:336.0px;top:495.56px">Vacant</div>
<div class="cell" style="left:434.0px;top:495.56px">-</div>
<div class="cell" style="left:557.0px;top:495.56px">-</div>
<div class="cell" style="left:673.0px;top:495.56px">-</div>
<div class="cell" style="left:786.5px;top:495.56px">No</div>
<div class="cell" style="left:871.0px;top:495.56px">N/A</div>
<div class="cell" style="left:971.0px;top:495.56px">-</div>
<div class="cell" style="left:1203.0px;top:495.56px">-</div>
<div class="abs" style="left:0;top:513.3px;width:1279.0px;height:1px;background:#ebeef2"></div>
<div class="cell or" style="left:66.0px;top:524.02px">201</div>
<div class="cell" style="left:122.0px;top:524.02px">2</div>
<div class="cell" style="left:175.0px;top:524.02px">Ekonomik Oda</div>
<div class="cell" style="left:264.0px;top:524.02px">Dirty</div>
<div class="cell" style="left:336.0px;top:524.02px">Vacant</div>
<div class="cell" style="left:434.0px;top:524.02px">-</div>
<div class="cell" style="left:557.0px;top:524.02px">-</div>
<div class="cell" style="left:673.0px;top:524.02px">-</div>
<div class="cell" style="left:786.5px;top:524.02px">No</div>
<div class="cell" style="left:871.0px;top:524.02px">N/A</div>
<div class="cell" style="left:971.0px;top:524.02px">-</div>
<div class="cell" style="left:1203.0px;top:524.02px">-</div>
<div class="abs" style="left:0;top:542.3px;width:1279.0px;height:1px;background:#ebeef2"></div>
<div class="cell or" style="left:66.0px;top:552.47px">204</div>
<div class="cell" style="left:122.0px;top:552.47px">2</div>
<div class="cell" style="left:175.0px;top:552.47px">Ekonomik Oda</div>
<div class="cell" style="left:264.0px;top:552.47px">Clean</div>
<div class="cell" style="left:336.0px;top:552.47px">Vacant</div>
<div class="cell" style="left:434.0px;top:552.47px">-</div>
<div class="cell" style="left:557.0px;top:552.47px">-</div>
<div class="cell" style="left:673.0px;top:552.47px">-</div>
<div class="cell" style="left:786.5px;top:552.47px">No</div>
<div class="cell" style="left:871.0px;top:552.47px">N/A</div>
<div class="cell" style="left:971.0px;top:552.47px">-</div>
<div class="cell" style="left:1203.0px;top:552.47px">-</div>
<div class="abs" style="left:0;top:570.3px;width:1279.0px;height:1px;background:#ebeef2"></div>
<div class="cell or" style="left:66.0px;top:580.93px">202</div>
<div class="cell" style="left:122.0px;top:580.93px">2</div>
<div class="cell" style="left:175.0px;top:580.93px">Ekonomik Oda</div>
<div class="cell" style="left:264.0px;top:580.93px">Dirty</div>
<div class="cell" style="left:336.0px;top:580.93px">Vacant</div>
<div class="cell" style="left:434.0px;top:580.93px">-</div>
<div class="cell" style="left:557.0px;top:580.93px">-</div>
<div class="cell" style="left:673.0px;top:580.93px">-</div>
<div class="cell" style="left:786.5px;top:580.93px">No</div>
<div class="cell" style="left:871.0px;top:580.93px">N/A</div>
<div class="cell" style="left:971.0px;top:580.93px">-</div>
<div class="cell" style="left:1203.0px;top:580.93px">-</div>
<div class="abs" style="left:0;top:599.3px;width:1279.0px;height:1px;background:#ebeef2"></div>
<div class="cell or" style="left:66.0px;top:609.39px">205</div>
<div class="cell" style="left:122.0px;top:609.39px">2</div>
<div class="cell" style="left:175.0px;top:609.39px">Ekonomik Oda</div>
<div class="cell" style="left:264.0px;top:609.39px">Clean</div>
<div class="cell" style="left:336.0px;top:609.39px">Vacant</div>
<div class="cell" style="left:434.0px;top:609.39px">-</div>
<div class="cell" style="left:557.0px;top:609.39px">-</div>
<div class="cell" style="left:673.0px;top:609.39px">-</div>
<div class="cell" style="left:786.5px;top:609.39px">No</div>
<div class="cell" style="left:871.0px;top:609.39px">N/A</div>
<div class="cell" style="left:971.0px;top:609.39px">-</div>
<div class="cell" style="left:1203.0px;top:609.39px">-</div>
</div>
<div class="abs" style="left:1531px;top:730px;width:46px;height:46px;border-radius:50%;background:#ea5421;box-shadow:0 2px 5px rgba(0,0,0,.25)"></div>
<svg style="left:1540px;top:740px" width="28" height="26" viewBox="0 0 28 26"><ellipse cx="14.5" cy="11.6" rx="12.3" ry="10.6" fill="#fff"/><path d="M5.5 17 L1.8 25 L10.5 21 Z" fill="#fff"/><path d="M6.4 9.4 H22 M6.4 13.5 H19 M6.4 17.3 H15.5" stroke="#ea5421" stroke-width="1.4"/></svg>
<svg style="left:190px;top:222px;z-index:5" width="80" height="16"><line x1="13" y1="8.3" x2="77" y2="8.3" stroke="#e8321e" stroke-width="2"/><path d="M4 8.3 L15.5 2.5 L15.5 14 Z" fill="#e8321e"/></svg>
</body></html>
